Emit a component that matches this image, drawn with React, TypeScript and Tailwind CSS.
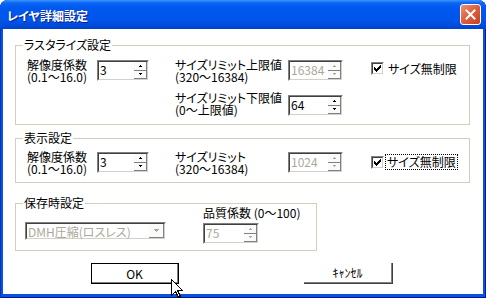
import React from 'react';

const DIS = '#ACA899';

function Tri({ up, disabled }: { up?: boolean; disabled?: boolean }) {
  const c = disabled ? DIS : '#000';
  return (
    <svg width="3" height="2" viewBox="0 0 3 2" shapeRendering="crispEdges">
      {up ? (
        <>
          <rect x="1" y="0" width="1" height="1" fill={c} />
          <rect x="0" y="1" width="3" height="1" fill={c} />
        </>
      ) : (
        <>
          <rect x="0" y="0" width="3" height="1" fill={c} />
          <rect x="1" y="1" width="1" height="1" fill={c} />
        </>
      )}
    </svg>
  );
}

function SpinBox({ value, disabled, className }: { value: string; disabled?: boolean; className: string }) {
  return (
    <div className={`flex h-[21px] border border-t-[#808080] border-l-[#808080] border-r-white border-b-white ${className}`}>
      <div className="flex flex-1 border border-t-[#404040] border-l-[#404040] border-r-[#D4D0C8] border-b-[#D4D0C8] bg-white">
        <div className={`flex-1 pl-[1px] pt-[2px] ${disabled ? 'text-[#ACA899]' : 'text-black'}`}>{value}</div>
        <div className="flex w-[13px] flex-col">
          <div className="flex flex-1 items-center justify-center border-r border-b border-[#808080] bg-[#FAFAFA]">
            <Tri up disabled={disabled} />
          </div>
          <div className="flex flex-1 items-center justify-center border-r border-b border-[#808080] bg-[#FAFAFA]">
            <Tri disabled={disabled} />
          </div>
        </div>
      </div>
    </div>
  );
}

function CheckBox() {
  const rows: [number, number, number][] = [
    [6, 1, 0],
    [5, 2, 1],
    [0, 1, 2],
    [4, 3, 2],
    [0, 2, 3],
    [3, 3, 3],
    [0, 5, 4],
    [1, 3, 5],
    [2, 1, 6],
  ];
  return (
    <div className="h-[13px] w-[13px] border border-t-[#808080] border-l-[#808080] border-r-white border-b-white">
      <div className="flex h-full w-full items-center justify-center border border-t-[#404040] border-l-[#404040] border-r-[#D4D0C8] border-b-[#D4D0C8] bg-white">
        <svg width="7" height="7" viewBox="0 0 7 7" shapeRendering="crispEdges">
          {rows.map(([x, w, y], i) => (
            <rect key={i} x={x} y={y} width={w} height="1" fill="#000" />
          ))}
        </svg>
      </div>
    </div>
  );
}

function Group({ title, className, children }: { title: string; className: string; children: React.ReactNode }) {
  return (
    <div className={`relative border border-[#D0D0BF] ${className}`}>
      <span className="absolute left-[7px] top-[-7px] bg-white px-[1px]">{title}</span>
      {children}
    </div>
  );
}

export default function App() {
  return (
    <div className="relative h-[298px] w-[486px] bg-white font-['Noto_Sans_CJK_JP',sans-serif] text-[12px] leading-[12px] text-black [font-feature-settings:'palt']">
      <div className="flex h-full w-full flex-col overflow-hidden rounded-t-[8px] bg-[#0553E3] shadow-[inset_1px_0_#0831B8,inset_-1px_0_#00138C,inset_0_-1px_#00138C]">
        {/* title bar */}
        <div className="flex h-[29px] items-center justify-between bg-[linear-gradient(to_bottom,#3D95FF_0px,#0A66F5_3px,#0058EE_8px,#0055EA_20px,#0049D6_27px,#0041C8_29px)] pl-[7px] pr-[5px]">
          <span className="pt-[2px] text-[12px] font-bold text-white [text-shadow:1px_1px_#0A1E8E]">レイヤ詳細設定</span>
          <div className="flex h-[21px] w-[21px] items-center justify-center rounded-[3px] border border-white bg-[linear-gradient(135deg,#EE9275_0%,#E06040_45%,#C8401A_100%)]">
            <svg width="11" height="11" viewBox="0 0 11 11">
              <path d="M1.5 1.5 L9.5 9.5 M9.5 1.5 L1.5 9.5" stroke="#fff" strokeWidth="2" strokeLinecap="square" />
            </svg>
          </div>
        </div>

        {/* client */}
        <div className="mx-[3px] mb-[4px] flex-1 bg-white pl-[12px] pt-[16px]">
          <Group title="ラスタライズ設定" className="h-[80px] w-[455px]">
            <div className="flex items-start pl-[11px] pt-[13px]">
              <div className="w-[70px]">
                解像度係数
                <br />
                (0.1〜16.0)
              </div>
              <SpinBox value="3" className="mt-[1px] w-[52px]" />
              <div className="ml-[26px] flex flex-col">
                <div className="flex items-start">
                  <div className="w-[113px] whitespace-nowrap">
                    サイズリミット上限値
                    <br />
                    (320〜16384)
                  </div>
                  <SpinBox value="16384" disabled className="mt-[1px] w-[55px]" />
                </div>
                <div className="mt-[9px] flex items-start">
                  <div className="w-[113px] whitespace-nowrap">
                    サイズリミット下限値
                    <br />
                    (0〜上限値)
                  </div>
                  <SpinBox value="64" className="mt-[3px] w-[55px]" />
                </div>
              </div>
              <div className="ml-[28px] mt-[3px] flex items-center gap-[3px]">
                <CheckBox />
                <span className="whitespace-nowrap px-[1px]">サイズ無制限</span>
              </div>
            </div>
          </Group>

          <Group title="表示設定" className="mt-[13px] h-[45px] w-[455px]">
            <div className="flex items-start pl-[11px] pt-[12px]">
              <div className="w-[70px]">
                解像度係数
                <br />
                (0.1〜16.0)
              </div>
              <SpinBox value="3" className="mt-[1px] w-[52px]" />
              <div className="ml-[26px] w-[113px] whitespace-nowrap">
                サイズリミット
                <br />
                (320〜16384)
              </div>
              <SpinBox value="1024" disabled className="mt-[1px] w-[55px]" />
              <div className="ml-[28px] mt-[4px] flex items-center gap-[2px]">
                <CheckBox />
                <span className="whitespace-nowrap px-[1px] py-[1px] outline outline-1 outline-dotted outline-black">サイズ無制限</span>
              </div>
            </div>
          </Group>

          <Group title="保存時設定" className="mt-[20px] h-[48px] w-[302px]">
            <div className="flex items-start pl-[9px]">
              <div className="mt-[18px] flex h-[18px] w-[141px] border border-t-[#808080] border-l-[#808080] border-r-white border-b-white">
                <div className="flex flex-1 border border-t-[#404040] border-l-[#404040] border-r-[#D4D0C8] border-b-[#D4D0C8] bg-white">
                  <div className="flex-1 whitespace-nowrap pl-[1px] pt-[2px] text-[#ACA899]">DMH圧縮(ロスレス)</div>
                  <div className="flex w-[15px] items-center justify-center border-r border-b border-[#808080] bg-[#FAFAFA]">
                    <svg width="5" height="3" viewBox="0 0 5 3" shapeRendering="crispEdges">
                      <rect x="0" y="0" width="5" height="1" fill={DIS} />
                      <rect x="1" y="1" width="3" height="1" fill={DIS} />
                      <rect x="2" y="2" width="1" height="1" fill={DIS} />
                    </svg>
                  </div>
                </div>
              </div>
              <div className="ml-[37px] flex flex-col pt-[3px]">
                <span className="whitespace-nowrap">品質係数 (0〜100)</span>
                <SpinBox value="75" disabled className="mt-[4px] w-[56px]" />
              </div>
            </div>
          </Group>

          <div className="mt-[12px] flex pl-[76px]">
            <button className="h-[21px] w-[88px] border border-black bg-white">
              <div className="flex h-full w-full items-center justify-center border-r border-b border-[#808080] pt-[1px]">OK</div>
            </button>
            <button className="ml-[125px] h-[21px] w-[89px] border-r border-b border-[#404040] bg-white">
              <div className="flex h-full w-full items-center justify-center border-r border-b border-[#808080] pt-[1px]">ｷｬﾝｾﾙ</div>
            </button>
          </div>
        </div>
      </div>

      {/* mouse cursor */}
      <svg className="absolute left-[171px] top-[279px]" width="12" height="19" viewBox="0 0 12 19" shapeRendering="crispEdges">
        <path d="M0.5 0.5 L0.5 16.5 L4.5 12.5 L7.5 18.5 L9.5 17.5 L6.5 11.5 L11.5 11.5 Z" fill="#fff" stroke="#000" strokeWidth="1" />
      </svg>
    </div>
  );
}
